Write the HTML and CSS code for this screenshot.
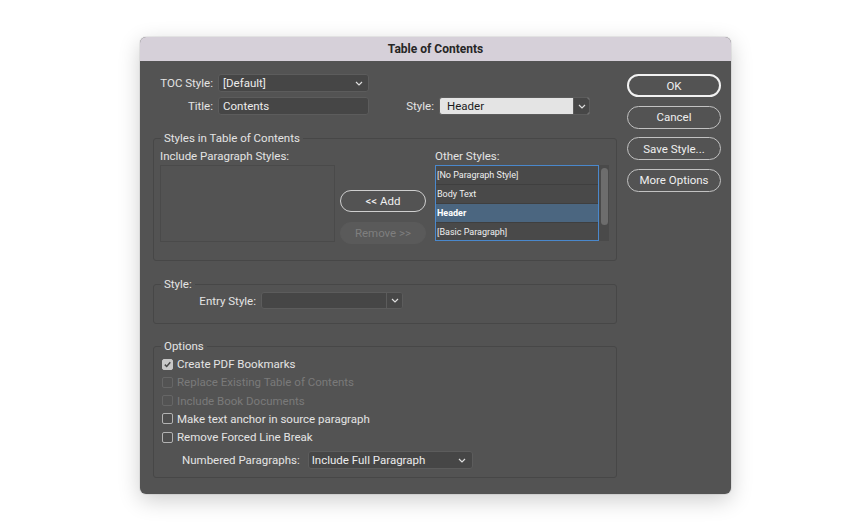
FILE: index.html
```html
<html>

<head>
    <meta charset="UTF-8">
    <title>Table of Contents</title>
    <link rel="stylesheet" href="styles.css">
</head>

<body>
    <div class="dialog">
        <div class="titlebar">Table of Contents</div>
        <div class="body">
            <div class="main">
                <div class="row">
                    <span class="lbl head-lbl">TOC Style:</span>
                    <div class="select toc">
                        <span>[Default]</span>
                        <svg class="chev" width="8" height="5" viewBox="0 0 8 5"><polyline points="1,1 4,4 7,1" /></svg>
                    </div>
                </div>
                <div class="row">
                    <span class="lbl head-lbl">Title:</span>
                    <div class="select toc">Contents</div>
                    <span class="lbl style-lbl">Style:</span>
                    <div class="select light">
                        <span>Header</span>
                        <span class="chev-box"><svg class="chev" width="8" height="5" viewBox="0 0 8 5"><polyline points="1,1 4,4 7,1" /></svg></span>
                    </div>
                </div>

                <fieldset class="group styles-group">
                    <legend>Styles in Table of Contents</legend>
                    <div class="styles-cols">
                        <div>
                            <div class="cap">Include Paragraph Styles:</div>
                            <div class="listbox include"></div>
                        </div>
                        <div class="mid">
                            <button class="btn add">&lt;&lt; Add</button>
                            <button class="btn remove" disabled>Remove &gt;&gt;</button>
                        </div>
                        <div class="other-col">
                            <div class="cap">Other Styles:</div>
                            <div class="list-wrap">
                                <ul class="listbox other">
                                    <li>[No Paragraph Style]</li>
                                    <li>Body Text</li>
                                    <li class="sel">Header</li>
                                    <li>[Basic Paragraph]</li>
                                </ul>
                                <div class="scroll">
                                    <div class="thumb"></div>
                                </div>
                            </div>
                        </div>
                    </div>
                </fieldset>

                <fieldset class="group style-group">
                    <legend>Style:</legend>
                    <div class="row">
                        <span class="lbl entry-lbl">Entry Style:</span>
                        <div class="select entry">
                            <span></span>
                            <span class="chev-box dark"><svg class="chev" width="8" height="5" viewBox="0 0 8 5"><polyline points="1,1 4,4 7,1" /></svg></span>
                        </div>
                    </div>
                </fieldset>

                <fieldset class="group options-group">
                    <legend>Options</legend>
                    <div class="check">
                        <span class="box checked"><svg width="9" height="9" viewBox="0 0 9 9"><polyline points="1.8,4.6 3.7,6.5 7.3,2.3" /></svg></span>
                        Create PDF Bookmarks
                    </div>
                    <div class="check disabled"><span class="box"></span>Replace Existing Table of Contents</div>
                    <div class="check disabled"><span class="box"></span>Include Book Documents</div>
                    <div class="check"><span class="box"></span>Make text anchor in source paragraph</div>
                    <div class="check"><span class="box"></span>Remove Forced Line Break</div>
                    <div class="row numbered">
                        <span class="lbl">Numbered Paragraphs:</span>
                        <div class="select num">
                            <span>Include Full Paragraph</span>
                            <svg class="chev" width="8" height="5" viewBox="0 0 8 5"><polyline points="1,1 4,4 7,1" /></svg>
                        </div>
                    </div>
                </fieldset>
            </div>

            <div class="actions">
                <button class="btn act default">OK</button>
                <button class="btn act">Cancel</button>
                <button class="btn act">Save Style...</button>
                <button class="btn act">More Options</button>
            </div>
        </div>
    </div>
</body>

</html>
```

FILE: styles.css
```css
body {
    margin: 0;
    background-color: #ffffff;
    font-family: "Roboto", "Liberation Sans", sans-serif;
    font-size: 11.5px;
    color: #e4e4e4;
}

.dialog {
    width: 591px;
    height: 457px;
    margin: 37px 0 0 140px;
    background-color: #535353;
    border-radius: 6px;
    overflow: hidden;
    box-shadow: 0 6px 22px rgba(0, 0, 0, 0.2), 0 0 0 1px rgba(0, 0, 0, 0.06);
}

.titlebar {
    height: 24px;
    line-height: 24px;
    background-color: #d6d0d9;
    color: #262626;
    font-weight: 700;
    font-size: 12px;
    text-align: center;
}

.body {
    display: flex;
    gap: 10px;
    padding: 13px 10px 0 13px;
}

.main {
    width: 464px;
}

.row {
    display: flex;
    align-items: center;
    height: 18px;
}

.row + .row {
    margin-top: 5px;
}

.lbl {
    white-space: nowrap;
}

.head-lbl {
    width: 60px;
    text-align: right;
    margin-right: 5px;
}

.style-lbl {
    margin-left: auto;
    margin-right: 5px;
}

/* dropdowns and text fields */
.select {
    box-sizing: border-box;
    height: 18px;
    display: flex;
    align-items: center;
    justify-content: space-between;
    padding-left: 4px;
    background-color: #464646;
    border: 1px solid #5c5c5c;
    border-radius: 3px;
    color: #ececec;
    font-size: 11.5px;
}

.toc {
    width: 151px;
    padding-right: 5px;
}

.light {
    width: 151px;
    margin-right: 27px;
    padding-left: 7px;
    background-color: #e4e4e4;
    border-color: #5c5c5c;
    color: #1c1c1c;
    overflow: hidden;
}

.chev polyline {
    fill: none;
    stroke: #dedede;
    stroke-width: 1.2;
}

.chev-box {
    width: 15px;
    height: 100%;
    display: flex;
    align-items: center;
    justify-content: center;
    background-color: #474747;
    border-left: 1px solid #5c5c5c;
}

.entry {
    width: 142px;
    height: 17px;
    margin-left: 5px;
    overflow: hidden;
}

.num {
    width: 165px;
    margin-left: 8px;
    padding-left: 3px;
    padding-right: 6px;
}

/* groups */
.group {
    margin: 16px 0 0 0;
    padding: 0 6px 16px 6px;
    border: 1px solid #474747;
    border-radius: 3px;
    min-inline-size: 0;
}

.group legend {
    padding: 0 3px;
    margin-left: 1px;
    line-height: 14px;
}

.styles-cols {
    display: flex;
    padding-top: 4px;
}

.cap {
    line-height: 14px;
    margin-bottom: 2px;
}

.listbox {
    box-sizing: border-box;
    margin: 0;
    padding: 0;
    list-style: none;
}

.include {
    width: 175px;
    height: 77px;
    border: 1px solid #4a4a4a;
}

.mid {
    display: flex;
    flex-direction: column;
    margin: 41px 0 0 5px;
    gap: 10px;
}

.btn {
    box-sizing: border-box;
    font-family: inherit;
    font-size: 11.5px;
    color: #efefef;
    background-color: transparent;
    border: 1.5px solid #cfcfcf;
    border-radius: 12px;
    padding: 0;
}

.add,
.remove {
    width: 86px;
    height: 22px;
}

.remove {
    background-color: #5a5a5a;
    border-color: #5a5a5a;
    color: #7f7f7f;
}

.other-col {
    margin-left: 9px;
}

.list-wrap {
    display: flex;
    height: 76px;
}

.other {
    width: 164px;
    height: 76px;
    border: 1px solid #4a88cc;
    background-color: #494949;
    font-size: 9px;
}

.other li {
    height: 19px;
    line-height: 18px;
    padding-left: 1px;
    border-bottom: 1px solid #3f3f3f;
    box-sizing: border-box;
    color: #f0f0f0;
}

.other li:last-child {
    border-bottom: 0;
}

.other li.sel {
    background-color: #4b6680;
    font-weight: 700;
    color: #ffffff;
}

.scroll {
    width: 10px;
    background-color: #4a4a4a;
    padding: 3px 1px 0 2px;
    box-sizing: border-box;
}

.thumb {
    height: 57px;
    border-radius: 4px;
    background-color: #6d6d6d;
}

.style-group {
    margin-top: 16px;
    padding-bottom: 14px;
}

.style-group .row {
    margin-top: 1px;
    height: 17px;
}

.entry-lbl {
    width: 96px;
    text-align: right;
}

.options-group {
    margin-top: 15px;
    padding-top: 2px;
    padding-bottom: 8px;
}

.check {
    display: flex;
    align-items: center;
    height: 18.25px;
    padding-left: 2px;
}

.box {
    box-sizing: border-box;
    width: 11px;
    height: 11px;
    margin-right: 4px;
    border: 1px solid #b3b3b3;
    border-radius: 2px;
    background-color: #4e4e4e;
    display: flex;
    align-items: center;
    justify-content: center;
}

.box.checked {
    background-color: #c9c9c9;
    border-color: #c9c9c9;
}

.box.checked polyline {
    fill: none;
    stroke: #4a4a4a;
    stroke-width: 1.5;
}

.check.disabled {
    color: #7a7a7a;
}

.check.disabled .box {
    border-color: #666666;
    background-color: transparent;
}

.numbered {
    margin-top: 5px;
    padding-left: 22px;
}

/* right side buttons */
.actions {
    width: 94px;
    display: flex;
    flex-direction: column;
    gap: 8.5px;
}

.act {
    height: 23px;
    border-color: #c2c2c2;
}

.act.default {
    border: 2px solid #f2f2f2;
}
```
